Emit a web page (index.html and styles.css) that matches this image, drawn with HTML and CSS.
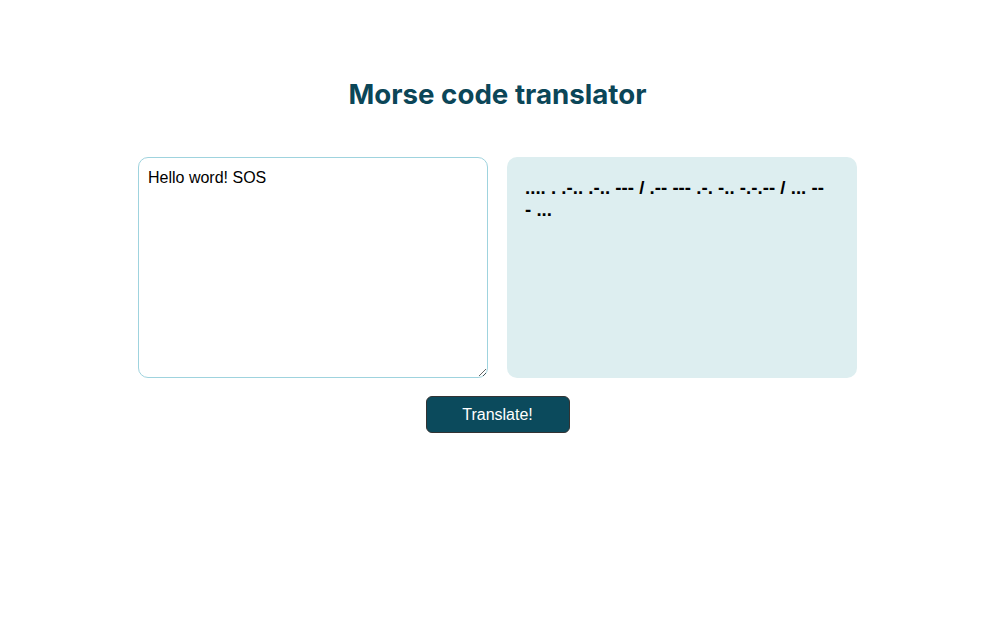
FILE: index.html
```html
<!DOCTYPE html>
<html>
<head>
<meta charset="utf-8">
<link rel="stylesheet" href="styles.css">
</head>
<body>
<main class="app">
  <h1 class="title">Morse code translator</h1>
  <div class="panes">
    <textarea class="input">Hello word! SOS</textarea>
    <div class="output">.... . .-.. .-.. --- / .-- --- .-. -.. -.-.-- / ... --- ...</div>
  </div>
  <button class="btn">Translate!</button>
</main>
</body>
</html>
```

FILE: styles.css
```css
html, body {
  margin: 0;
  padding: 0;
  background: #ffffff;
}
body {
  font-family: Inter, "Liberation Sans", sans-serif;
  padding-right: 7px;
}
.app {
  display: flex;
  flex-direction: column;
  align-items: center;
  padding-top: 76px;
}
.title {
  margin: 0;
  font-size: 27.7px;
  font-weight: 700;
  color: #0b4658;
  line-height: 36px;
}
.panes {
  display: flex;
  gap: 19px;
  margin-top: 45px;
}
.input {
  box-sizing: border-box;
  width: 350px;
  height: 221px;
  border: 1px solid #9fd3de;
  border-radius: 10px;
  padding: 10px 9px;
  font-family: "Liberation Sans", Arial, sans-serif;
  font-size: 16px;
  line-height: 20px;
  color: #000;
  resize: vertical;
  outline: none;
  margin: 0;
}
.output {
  box-sizing: border-box;
  width: 350px;
  height: 221px;
  background: #ddeef0;
  border-radius: 10px;
  padding: 20px 33px 20px 18px;
  font-family: "Liberation Sans", Arial, sans-serif;
  font-weight: 700;
  font-size: 18.7px;
  line-height: 22px;
  color: #000;
  word-break: break-all;
}
.btn {
  margin-top: 18px;
  width: 144px;
  height: 37px;
  background: #0b4a5c;
  color: #ffffff;
  border: 1px solid #333;
  border-radius: 6px;
  font-family: "Liberation Sans", Arial, sans-serif;
  font-size: 16px;
  cursor: pointer;
}
```
